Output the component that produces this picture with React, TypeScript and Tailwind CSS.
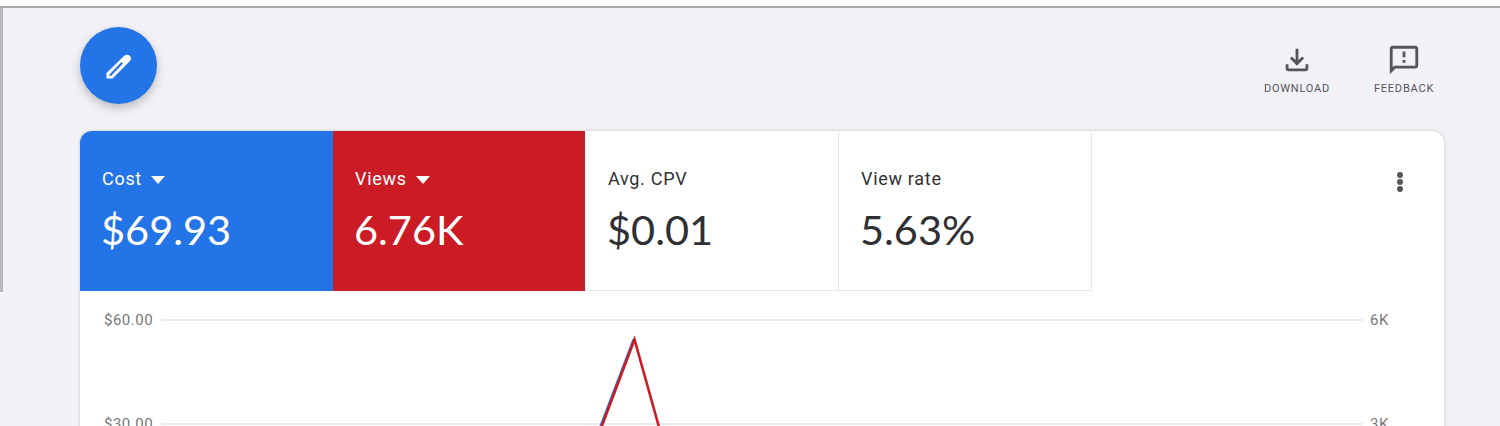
import type { ReactNode } from "react";

function MetricTile({ label, value, tile }: { label: string; value: string; tile: string }) {
  const active = tile.includes("text-white");
  return (
    <div className={`flex h-[160px] shrink-0 flex-col pt-[36px] ${tile}`}>
      <div className="flex h-6 items-center gap-[9px] font-['Roboto',sans-serif] text-[18px] leading-6 tracking-[0.7px]">
        {label}
        {active && <span className="mt-px h-0 w-0 border-x-[7.5px] border-t-[8px] border-x-transparent border-t-white" />}
      </div>
      <div className="ml-[-1px] mt-[12px] font-['Lato',sans-serif] text-[41.5px] leading-[52px]">{value}</div>
    </div>
  );
}

function ActionButton({ label, children }: { label: string; children: ReactNode }) {
  return (
    <div className="flex w-[80px] flex-col items-center text-[#54555a]">
      <svg viewBox="0 0 24 24" className="h-[34px] w-[34px] fill-current">
        {children}
      </svg>
      <span className="mt-[5px] font-['Roboto',sans-serif] text-[11px] leading-[14px] tracking-[0.8px]">{label}</span>
    </div>
  );
}

function AxisRow({ left, right }: { left: string; right: string }) {
  return (
    <div className="flex h-[14px] items-center font-['Roboto',sans-serif] text-[15px] leading-[14px] tracking-[0.5px] text-[#77787c]">
      <span className="w-[81px] pl-[24px] shrink-0">{left}</span>
      <span className="h-[2px] w-[1202px] bg-[#ebebee]" />
      <span className="ml-[7px]">{right}</span>
    </div>
  );
}

export default function App() {
  return (
    <div className="h-[426px] w-[1500px] overflow-hidden bg-[#f2f1f6]">
      <div className="h-[8px] border-b-2 border-[#a9a7ad] bg-white" />

      <div className="flex">
        <div className="h-[284px] w-[3px] shrink-0 bg-[#b9b8bc]" />

        <div className="w-[1441px] pl-[77px]">
          <div className="flex h-[123px] items-start justify-between pt-[19px]">
            <button className="flex h-[77px] w-[77px] items-center justify-center rounded-full bg-[#2374e6] shadow-[0_4px_10px_rgba(60,60,70,0.3)]">
              <svg viewBox="0 0 26 26" className="h-[26px] w-[26px] fill-white">
                <path
                  fillRule="evenodd"
                  d="M.5 20 18 3q3-2.5 6 0 2.5 3-.5 5.500L6.500 25.500H.5ZM3.500 21.500v1.500H5L17 10.500 15.500 9Z"
                />
              </svg>
            </button>

            <div className="flex gap-[27px] pt-[16px]">
              <ActionButton label="DOWNLOAD">
                <path d="M18 15v3H6v-3H4v3c0 1.1.9 2 2 2h12c1.1 0 2-.9 2-2v-3h-2zm-1-4-1.41-1.41L13 12.17V4h-2v8.17L8.41 9.59 7 11l5 5 5-5z" />
              </ActionButton>
              <ActionButton label="FEEDBACK">
                <path d="M20 2H4c-1.1 0-1.99.9-1.99 2L2 22l4-4h14c1.1 0 2-.9 2-2V4c0-1.1-.9-2-2-2zm0 14H5.17l-.59.59-.58.58V4h16v12zm-9-4h2v2h-2zm0-6h2v4h-2z" />
              </ActionButton>
            </div>
          </div>

          <div className="h-[400px] w-[1364px] overflow-hidden rounded-t-[12px] bg-white shadow-[0_0_3px_rgba(90,90,100,0.35)]">
            <div className="flex">
              <MetricTile label="Cost" value="$69.93" tile="w-[253px] pl-[22px] bg-[#2374e6] text-white" />
              <MetricTile label="Views" value="6.76K" tile="w-[252px] pl-[22px] bg-[#cb1c26] text-white" />
              <MetricTile label="Avg. CPV" value="$0.01" tile="w-[254px] pl-[23px] border-r border-b border-[#e8e8ea] bg-white text-[#2f3034]" />
              <MetricTile label="View rate" value="5.63%" tile="w-[253px] pl-[22px] border-r border-b border-[#e8e8ea] bg-white text-[#2f3034]" />
              <div className="ml-auto mr-[41px] mt-[41px] flex h-[20px] flex-col justify-between">
                <span className="h-[6px] w-[6px] rounded-full bg-[#54555a]" />
                <span className="h-[6px] w-[6px] rounded-full bg-[#54555a]" />
                <span className="h-[6px] w-[6px] rounded-full bg-[#54555a]" />
              </div>
            </div>

            <div className="relative flex flex-col gap-[90px] pt-[22px]">
              <AxisRow left="$60.00" right="6K" />
              <AxisRow left="$30.00" right="3K" />
              <svg className="absolute left-[500px] top-[40px] h-[100px] w-[100px] fill-none" viewBox="0 0 100 100">
                <path d="M20.500 96 53.800 8.500" stroke="#2b6fdc" strokeWidth="2.800" />
                <path d="M21.500 96 54.500 8.500 79 96" stroke="#cb1c26" strokeWidth="2.600" />
              </svg>
            </div>
          </div>
        </div>
      </div>
    </div>
  );
}
